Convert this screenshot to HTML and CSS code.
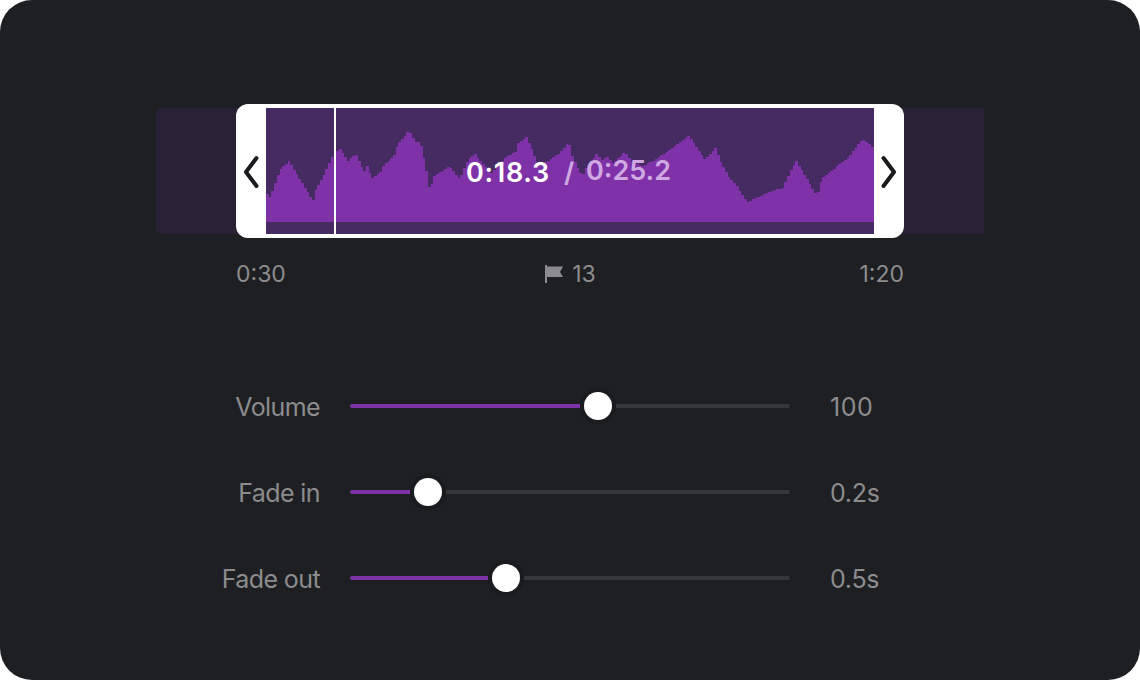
FILE: index.html
```html
<!DOCTYPE html>
<html lang="en">
<head>
    <meta charset="UTF-8">
    <meta name="viewport" content="width=device-width, initial-scale=1.0">
    <title>Audio trimmer</title>
    <link rel="stylesheet" href="styles.css">
</head>
<body>
    <div class="panel">
        <div class="timeline">
            <div class="clip">
                <button class="handle" aria-label="Trim start">
                    <svg width="16" height="34" viewBox="0 0 16 34"><path d="M13.5 3 L3 17 L13.5 31"/></svg>
                </button>
                <div class="wave">
                    <svg class="wave-shape" width="608" height="126" viewBox="0 0 608 126"><path id="wavePath"/></svg>
                    <div class="playhead"></div>
                    <div class="time">
                        <span class="current">0:18.3</span>
                        <span class="slash">/</span>
                        <span class="total">0:25.2</span>
                    </div>
                </div>
                <button class="handle" aria-label="Trim end">
                    <svg width="16" height="34" viewBox="0 0 16 34"><path d="M2.5 3 L13 17 L2.5 31"/></svg>
                </button>
            </div>
        </div>

        <div class="marks">
            <span>0:30</span>
            <span class="flag">
                <svg width="20" height="20" viewBox="0 0 20 20"><path d="M1 1 H3 V2.5 H19 L16 8 L19 13 H3 V19 H1 Z"/></svg>
                13
            </span>
            <span class="end">1:20</span>
        </div>

        <div class="sliders">
            <div class="row">
                <label>Volume</label>
                <div class="track"><div class="fill" style="width:230px"></div><div class="knob"></div><div class="rest"></div></div>
                <span class="value whole">100</span>
            </div>
            <div class="row">
                <label>Fade in</label>
                <div class="track"><div class="fill" style="width:60px"></div><div class="knob"></div><div class="rest"></div></div>
                <span class="value">0.2s</span>
            </div>
            <div class="row">
                <label>Fade out</label>
                <div class="track"><div class="fill" style="width:138px"></div><div class="knob"></div><div class="rest"></div></div>
                <span class="value">0.5s</span>
            </div>
        </div>
    </div>
    <script src="script.js"></script>
</body>
</html>
```

FILE: styles.css
```css
* {
    margin: 0;
    padding: 0;
    box-sizing: border-box;
}

body {
    background-color: #fff;
    font-family: Inter, "Liberation Sans", sans-serif;
    color: #8c8c8e;
}

.panel {
    width: 1140px;
    height: 680px;
    padding-top: 108px;
    border-radius: 32px;
    background-color: #1e1f23;
    overflow: hidden;
}

/* timeline */
.timeline {
    display: flex;
    justify-content: center;
    align-items: center;
    width: 828px;
    height: 126px;
    margin: 0 auto;
    border-radius: 6px 0 0 6px;
    background-color: #292135;
}

.clip {
    display: flex;
    flex-shrink: 0;
    width: 668px;
    height: 134px;
    padding: 4px 0;
    border-radius: 12px;
    background-color: #fff;
}

.handle {
    display: flex;
    justify-content: center;
    align-items: center;
    width: 30px;
    padding-top: 2px;
    border: none;
    background: none;
    cursor: ew-resize;
}

.handle path {
    fill: none;
    stroke: #1a1b1e;
    stroke-width: 4;
    stroke-linecap: round;
    stroke-linejoin: round;
}

.wave {
    position: relative;
    width: 608px;
    height: 126px;
    background-color: #462a62;
}

.wave-shape {
    display: block;
}

.wave-shape path {
    fill: #7f32a8;
    shape-rendering: crispEdges;
}

.playhead {
    position: absolute;
    top: 0;
    left: 68px;
    width: 2px;
    height: 126px;
    background-color: #fff;
}

.time {
    position: absolute;
    top: 49px;
    left: 200px;
    display: flex;
    font-size: 27px;
    line-height: 32px;
    font-weight: 600;
    color: #d0a9e3;
}

.time .current {
    width: 98px;
    letter-spacing: 0.7px;
    color: #fff;
}

.time .slash {
    width: 22px;
}

.time .total {
    margin-top: -2px;
}

/* labels under the timeline */
.marks {
    display: flex;
    justify-content: space-between;
    width: 668px;
    height: 30px;
    margin: 25px auto 0;
    font-size: 23px;
    line-height: 30px;
}

.marks > span {
    width: 200px;
}

.marks .flag {
    display: flex;
    justify-content: center;
    align-items: center;
    gap: 8px;
}

.flag path {
    fill: #8c8c8e;
}

.marks .end {
    text-align: right;
}

/* sliders */
.sliders {
    display: flex;
    flex-direction: column;
    gap: 46px;
    margin-top: 97px;
}

.row {
    display: flex;
    align-items: center;
    height: 40px;
    font-size: 25px;
}

.row label {
    width: 320px;
    padding-top: 1px;
    text-align: right;
    letter-spacing: -0.6px;
}

.row .value {
    margin-left: 40px;
    padding-top: 1px;
    letter-spacing: -0.3px;
}

.row .whole {
    letter-spacing: 0.5px;
}

.track {
    display: flex;
    align-items: center;
    width: 440px;
    margin-left: 30px;
}

.fill {
    height: 4px;
    border-radius: 2px 0 0 2px;
    background-color: #7f32a8;
}

.knob {
    width: 28px;
    height: 28px;
    margin: 0 4px;
    border-radius: 50%;
    background-color: #fff;
    box-shadow: 0 0 0 4px #1a1b1e;
}

.rest {
    flex: 1;
    height: 4px;
    border-radius: 0 2px 2px 0;
    background-color: #363739;
}
```

FILE: script.js
```js
// peaks of the waveform, [x, y]
const peaks = [
    [0, 85], [5, 90], [7, 82], [14, 62], [23, 53], [47, 93], [50, 82], [59, 65],
    [67, 47], [74, 41], [82, 53], [90, 46], [98, 64], [101, 57], [106, 70],
    [115, 64], [118, 57], [128, 48], [132, 36], [143, 23], [151, 36], [154, 32],
    [159, 55], [162, 70], [164, 83], [168, 69], [183, 58], [194, 71], [202, 52],
    [209, 46], [225, 65], [240, 49], [250, 44], [252, 35], [261, 29], [271, 54],
    [277, 56], [294, 45], [303, 34], [307, 50], [316, 68], [320, 60], [331, 46],
    [336, 52], [341, 48], [347, 55], [359, 44], [366, 54], [377, 58], [387, 53],
    [399, 45], [423, 28], [439, 51], [450, 40], [454, 52], [464, 71], [469, 75],
    [481, 94], [491, 90], [502, 84], [517, 80], [530, 52], [551, 88], [556, 70],
    [582, 50], [596, 32], [599, 32], [608, 41]
];
const step = 2.7;
const bottom = 114;

function heightAt(x) {
    for (let i = 1; i < peaks.length; i++) {
        const [x1, y1] = peaks[i - 1];
        const [x2, y2] = peaks[i];
        if (x <= x2) {
            return y1 + (y2 - y1) * (x - x1) / (x2 - x1);
        }
    }
    return peaks[peaks.length - 1][1];
}

let d = "M0 " + bottom;
for (let x = 0; x < 608; x += step) {
    d += " V" + Math.round(heightAt(x + step / 2)) + " H" + Math.min(x + step, 608);
}
document.getElementById("wavePath").setAttribute("d", d + " V" + bottom + " Z");
```
